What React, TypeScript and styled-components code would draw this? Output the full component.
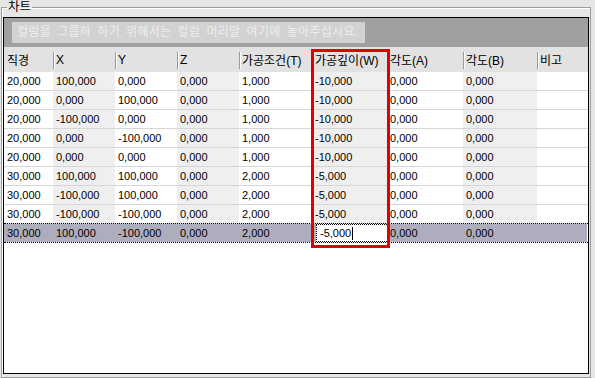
import React from "react";
import styled, { createGlobalStyle, css } from "styled-components";

const GlobalStyle = createGlobalStyle`
  html, body {
    margin: 0;
    padding: 0;
    background: #e6e6e6;
  }
  body {
    width: 595px;
    height: 378px;
    overflow: hidden;
    font-family: "Liberation Sans", "Noto Sans CJK KR", sans-serif;
    color: #000;
  }
`;

const Page = styled.div`
  width: 595px;
  height: 378px;
  box-sizing: border-box;
  padding: 0 4px 0 1px;
  background: #e6e6e6;
`;

const Frame = styled.fieldset`
  margin: 0;
  min-width: 0;
  height: 378px;
  box-sizing: border-box;
  border: 1px solid #9c9c9c;
  box-shadow: inset 1px 1px 0 #ffffff;
  padding: 2px 1px 0 1px;
`;

const Title = styled.legend`
  margin-left: 4px;
  padding: 0 1px;
  font-size: 12.5px;
  line-height: 15px;
  height: 15px;
  font-family: "Liberation Sans", "Noto Sans CJK KR", sans-serif;
`;

const Grid = styled.div`
  position: relative;
  height: 357px;
  box-sizing: border-box;
  border: 1px solid #000;
  background: #ffffff;
  display: flex;
  flex-direction: column;
`;

const GroupPanel = styled.div`
  height: 29px;
  box-sizing: border-box;
  padding: 4px 0 0 8px;
  background: #a0a0a0;
  display: flex;
  align-items: flex-start;
`;

const GroupHint = styled.div`
  height: 21px;
  width: 353px;
  box-sizing: border-box;
  padding-left: 5px;
  background: #d2d2d2;
  color: #eeeeee;
  font-size: 12px;
  line-height: 21px;
  white-space: nowrap;
  letter-spacing: 0.3px;
  word-spacing: 2.5px;
`;

const HeaderRow = styled.div`
  display: flex;
  height: 25px;
  background: #e2e2e2;
`;

const HeaderCell = styled.div<{ $w: number }>`
  width: ${(p) => p.$w}px;
  flex: none;
  display: flex;
  align-items: center;
  font-size: 12px;
  white-space: nowrap;
  overflow: hidden;
`;

const Divider = styled.span`
  width: 1px;
  height: 17px;
  margin-top: 2px;
  background: #9a9a9a;
  box-shadow: 1px 0 0 #ffffff;
  flex: none;
`;

const HeaderLabel = styled.span<{ $first?: boolean }>`
  margin-left: ${(p) => (p.$first ? 3 : 2)}px;
`;

const Row = styled.div<{ $selected?: boolean }>`
  display: flex;
  height: 19px;
  box-sizing: border-box;
  border-bottom: 1px solid #d6d6d6;
  ${(p) =>
    p.$selected &&
    css`
      border-top: 1px dotted #000;
      border-bottom: 1px dotted #000;
      margin-top: -1px;
      height: 20px;
    `}
`;

const Cell = styled.div<{ $w: number; $shade: boolean; $selected?: boolean }>`
  width: ${(p) => p.$w}px;
  flex: none;
  box-sizing: border-box;
  padding-left: 3px;
  font-size: 11px;
  line-height: 18px;
  white-space: nowrap;
  overflow: hidden;
  background: ${(p) =>
    p.$selected ? "#aeadbe" : p.$shade ? "#efefef" : "#ffffff"};
`;

const EditCell = styled.div<{ $w: number }>`
  width: ${(p) => p.$w}px;
  flex: none;
  box-sizing: border-box;
  padding-left: 3px;
  margin: 0 1px;
  font-size: 11px;
  line-height: 16px;
  white-space: nowrap;
  background: #ffffff;
  border: 1px dotted #000;
  display: flex;
  align-items: center;
`;

const Caret = styled.span`
  display: inline-block;
  width: 1px;
  height: 13px;
  background: #000;
  margin-left: 1px;
`;

const Highlight = styled.div`
  position: absolute;
  left: 307px;
  top: 31px;
  width: 79px;
  height: 199px;
  box-sizing: border-box;
  border: 3px solid #e40000;
  pointer-events: none;
`;

const columns = [
  { label: "직경", w: 49 },
  { label: "X", w: 62 },
  { label: "Y", w: 62 },
  { label: "Z", w: 62 },
  { label: "가공조건(T)", w: 73 },
  { label: "가공깊이(W)", w: 75 },
  { label: "각도(A)", w: 76 },
  { label: "각도(B)", w: 74 },
  { label: "비고", w: 50 },
];

const rows: string[][] = [
  ["20,000", "100,000", "0,000", "0,000", "1,000", "-10,000", "0,000", "0,000", ""],
  ["20,000", "0,000", "100,000", "0,000", "1,000", "-10,000", "0,000", "0,000", ""],
  ["20,000", "-100,000", "0,000", "0,000", "1,000", "-10,000", "0,000", "0,000", ""],
  ["20,000", "0,000", "-100,000", "0,000", "1,000", "-10,000", "0,000", "0,000", ""],
  ["20,000", "0,000", "0,000", "0,000", "1,000", "-10,000", "0,000", "0,000", ""],
  ["30,000", "100,000", "100,000", "0,000", "2,000", "-5,000", "0,000", "0,000", ""],
  ["30,000", "-100,000", "100,000", "0,000", "2,000", "-5,000", "0,000", "0,000", ""],
  ["30,000", "-100,000", "-100,000", "0,000", "2,000", "-5,000", "0,000", "0,000", ""],
  ["30,000", "100,000", "-100,000", "0,000", "2,000", "-5,000", "0,000", "0,000", ""],
];

const SELECTED = 8;
const EDIT_COL = 5;

export default function App() {
  return (
    <>
      <GlobalStyle />
      <Page>
        <Frame>
          <Title>차트</Title>
          <Grid>
            <GroupPanel>
              <GroupHint>컬럼을 그룹하 하기 위해서는 컬럼 머리말 여기에 놓아주십시요.</GroupHint>
            </GroupPanel>
            <HeaderRow>
              {columns.map((c, i) => (
                <HeaderCell key={c.label} $w={c.w}>
                  {i > 0 && <Divider />}
                  <HeaderLabel $first={i === 0}>{c.label}</HeaderLabel>
                </HeaderCell>
              ))}
            </HeaderRow>
            {rows.map((r, ri) => {
              const sel = ri === SELECTED;
              return (
                <Row key={ri} $selected={sel}>
                  {r.map((v, ci) =>
                    sel && ci === EDIT_COL ? (
                      <Cell key={ci} $w={columns[ci].w} $shade={false} $selected>
                        <EditCell $w={columns[ci].w - 2}>
                          {v}
                          <Caret />
                        </EditCell>
                      </Cell>
                    ) : (
                      <Cell key={ci} $w={columns[ci].w} $shade={ci % 2 === 1} $selected={sel}>
                        {v}
                      </Cell>
                    )
                  )}
                </Row>
              );
            })}
            <Highlight />
          </Grid>
        </Frame>
      </Page>
    </>
  );
}
